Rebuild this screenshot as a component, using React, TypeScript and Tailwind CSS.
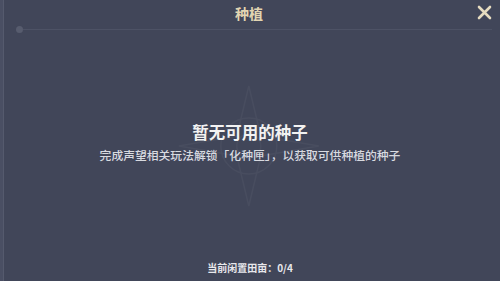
import React from 'react'

const FONT = { fontFamily: '"Noto Sans CJK SC", "Noto Sans", sans-serif' }

function CloseIcon() {
  return (
    <svg width="15" height="15" viewBox="0 0 15 15" aria-hidden="true">
      <path d="M2 2 L13 13 M13 2 L2 13" stroke="#e6dcc0" strokeWidth="2.6" strokeLinecap="round" />
    </svg>
  )
}

// faint emblem behind the empty-state text
function Emblem() {
  return (
    <svg width="160" height="130" viewBox="0 0 160 130" className="opacity-[0.035]" aria-hidden="true">
      <g stroke="#ffffff" strokeWidth="1.5" fill="none">
        <path d="M80 5 L92 55 L150 65 L92 75 L80 125 L68 75 L10 65 L68 55 Z" />
        <circle cx="80" cy="65" r="28" />
        <circle cx="80" cy="65" r="12" />
      </g>
    </svg>
  )
}

export default function App() {
  return (
    <div className="relative flex h-[281px] w-[500px] overflow-hidden bg-[#414659]" style={FONT}>
      {/* left frame strip */}
      <div className="h-full w-[3px] bg-[#4a4f63]" />
      <div className="h-full w-px bg-[#555a6d]" />

      <div className="flex flex-1 flex-col">
        {/* header */}
        <div className="relative flex h-[26px] items-start justify-center pt-[6px]">
          <span className="pr-[6px] text-[14px] font-bold leading-none text-[#e2d5b2]">种植</span>
          <button className="absolute right-[8px] top-[5px]">
            <CloseIcon />
          </button>
        </div>
        <div className="flex items-center pl-[12px] pr-[8px]">
          <div className="h-[7px] w-[7px] rounded-full bg-[#575c6e]" />
          <div className="h-px flex-1 bg-[#4d5265]" />
        </div>

        {/* empty state */}
        <div className="relative flex flex-1 flex-col items-center pt-[91px]">
          <div className="absolute left-1/2 top-[48px] -translate-x-[52%]">
            <Emblem />
          </div>
          <div className="relative pr-[4px] text-[16.5px] font-bold leading-none text-[#f2f2f2]">
            暂无可用的种子
          </div>
          <div className="relative mt-[8px] pr-[4px] text-[11.8px] font-medium leading-none text-[#d8dae0]">
            完成声望相关玩法解锁「化种匣」，以获取可供种植的种子
          </div>
        </div>

        {/* footer */}
        <div className="flex h-[18px] items-start justify-center">
          <span className="pr-[4px] text-[10px] font-bold leading-none text-[#e8e8ec]">当前闲置田亩：0/4</span>
        </div>
      </div>
    </div>
  )
}
